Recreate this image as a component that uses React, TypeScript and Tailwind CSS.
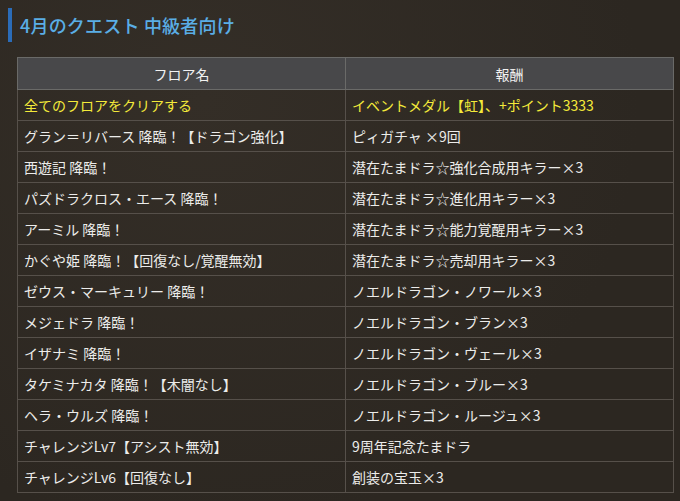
const rows: [string, string][] = [
  ['グラン＝リバース 降臨！【ドラゴン強化】', 'ピィガチャ ×9回'],
  ['西遊記 降臨！', '潜在たまドラ☆強化合成用キラー×3'],
  ['パズドラクロス・エース 降臨！', '潜在たまドラ☆進化用キラー×3'],
  ['アーミル 降臨！', '潜在たまドラ☆能力覚醒用キラー×3'],
  ['かぐや姫 降臨！【回復なし/覚醒無効】', '潜在たまドラ☆売却用キラー×3'],
  ['ゼウス・マーキュリー 降臨！', 'ノエルドラゴン・ノワール×3'],
  ['メジェドラ 降臨！', 'ノエルドラゴン・ブラン×3'],
  ['イザナミ 降臨！', 'ノエルドラゴン・ヴェール×3'],
  ['タケミナカタ 降臨！【木闇なし】', 'ノエルドラゴン・ブルー×3'],
  ['ヘラ・ウルズ 降臨！', 'ノエルドラゴン・ルージュ×3'],
  ['チャレンジLv7【アシスト無効】', '9周年記念たまドラ'],
  ['チャレンジLv6【回復なし】', '創装の宝玉×3'],
];

export default function App() {
  return (
    <div
      className="w-[680px] h-[501px] overflow-hidden bg-[#2f2a24] bg-[radial-gradient(circle_at_30%_20%,#342e27_0%,#2c2721_70%)]"
      style={{ fontFamily: '"Noto Sans CJK JP", "Noto Sans", sans-serif' }}
    >
      <div className="pt-2 pl-2">
        <div className="flex items-center h-[34px] border-l-4 border-[#2b6cb8] pl-2">
          <h2 className="text-[18px] leading-none text-[#5aaee6] font-medium tracking-[0.2px]">
            4月のクエスト 中級者向け
          </h2>
        </div>
      </div>

      <table className="ml-[17px] mt-[15px] w-[657px] border-collapse text-[14px] leading-none">
        <thead>
          <tr className="h-[32px] bg-[#48484a]">
            <th className="w-[328px] border border-[#6a6a68] font-normal text-[#f2f2f2] text-center">フロア名</th>
            <th className="border border-[#6a6a68] font-normal text-[#f2f2f2] text-center">報酬</th>
          </tr>
        </thead>
        <tbody>
          <tr className="h-[31px]">
            <td className="border border-[#56504a] pl-[6px] text-[#f4ea3a]">全てのフロアをクリアする</td>
            <td className="border border-[#56504a] pl-[6px] text-[#f4ea3a]">イベントメダル【虹】、+ポイント3333</td>
          </tr>
          {rows.map(([floor, reward]) => (
            <tr key={floor} className="h-[31px]">
              <td className="border border-[#56504a] pl-[6px] text-[#ececea]">{floor}</td>
              <td className="border border-[#56504a] pl-[6px] text-[#ececea]">{reward}</td>
            </tr>
          ))}
        </tbody>
      </table>
    </div>
  );
}
